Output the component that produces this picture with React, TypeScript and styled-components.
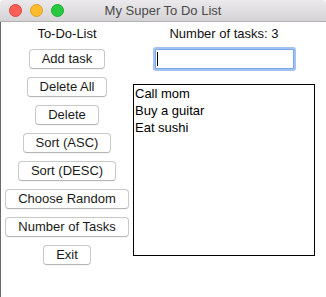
import styled, { createGlobalStyle } from 'styled-components'

const GlobalStyle = createGlobalStyle`
    html, body {
        margin: 0;
        padding: 0;
        background: #ffffff;
    }
    body {
        font-family: "Liberation Sans", Arial, sans-serif;
        font-size: 13px;
        color: #1a1a1a;
    }
`

const Window = styled.div`
    width: 326px;
    height: 297px;
    overflow: hidden;
    background: #ffffff;
`

const TitleBar = styled.div`
    height: 21px;
    display: grid;
    grid-template-columns: 1fr auto 1fr;
    align-items: center;
    background: linear-gradient(#ebe9eb, #d5d3d5);
    border-bottom: 1px solid #b1b1b1;
    border-radius: 4px 4px 0 0;
`

const Lights = styled.div`
    display: flex;
    gap: 8px;
    padding-left: 9px;
`

const Light = styled.span<{ $fill: string; $edge: string }>`
    width: 11px;
    height: 11px;
    border-radius: 50%;
    background: ${(p) => p.$fill};
    border: 0.5px solid ${(p) => p.$edge};
`

const Title = styled.div`
    font-size: 13px;
    color: #4a4a4a;
`

const Body = styled.div`
    height: 275px;
    display: grid;
    grid-template-columns: 132px 182px;
    border-left: 1px solid #6b6b6b;
`

const Column = styled.div`
    display: flex;
    flex-direction: column;
    align-items: center;
    padding-top: 3px;
`

const Label = styled.div`
    line-height: 17px;
    font-size: 13px;
    color: #111;
`

const Buttons = styled.div`
    display: flex;
    flex-direction: column;
    align-items: center;
    gap: 8px;
    margin-top: 7px;
`

const Button = styled.button`
    height: 20px;
    padding: 0 12px;
    background: #ffffff;
    border: 1px solid #c9c9c9;
    border-bottom-color: #b5b5b5;
    border-radius: 4px;
    font-family: inherit;
    font-size: 13px;
    line-height: 18px;
    color: #1a1a1a;
    box-shadow: 0 0.5px 0.5px rgba(0, 0, 0, 0.08);
`

const Entry = styled.div`
    box-sizing: border-box;
    width: 139px;
    height: 20px;
    margin-top: 7px;
    display: flex;
    align-items: center;
    padding-left: 1px;
    border: 1px solid #79a6ea;
    box-shadow: 0 0 0 2px #a3c4f3;
    border-radius: 1px;
    background: #fff;
`

const Caret = styled.span`
    width: 1px;
    height: 14px;
    background: #000;
`

const ListBox = styled.ul`
    box-sizing: border-box;
    align-self: stretch;
    height: 172px;
    margin: 15px 0 0;
    padding: 0 0 0 1px;
    list-style: none;
    border: 1px solid #000;
`

const Item = styled.li`
    line-height: 17px;
    font-size: 13px;
    color: #000;
`

const actions = [
    'Add task',
    'Delete All',
    'Delete',
    'Sort (ASC)',
    'Sort (DESC)',
    'Choose Random',
    'Number of Tasks',
    'Exit',
]

const tasks = ['Call mom', 'Buy a guitar', 'Eat sushi']

export default function App() {
    return (
        <>
            <GlobalStyle />
            <Window>
                <TitleBar>
                    <Lights>
                        <Light $fill="#fc5f57" $edge="#e0443e" />
                        <Light $fill="#fdbc2e" $edge="#dea123" />
                        <Light $fill="#28c840" $edge="#1aab29" />
                    </Lights>
                    <Title>My Super To Do List</Title>
                    <span />
                </TitleBar>
                <Body>
                    <Column>
                        <Label>To-Do-List</Label>
                        <Buttons>
                            {actions.map((a) => (
                                <Button key={a}>{a}</Button>
                            ))}
                        </Buttons>
                    </Column>
                    <Column>
                        <Label>Number of tasks: {tasks.length}</Label>
                        <Entry>
                            <Caret />
                        </Entry>
                        <ListBox>
                            {tasks.map((t) => (
                                <Item key={t}>{t}</Item>
                            ))}
                        </ListBox>
                    </Column>
                </Body>
            </Window>
        </>
    )
}
